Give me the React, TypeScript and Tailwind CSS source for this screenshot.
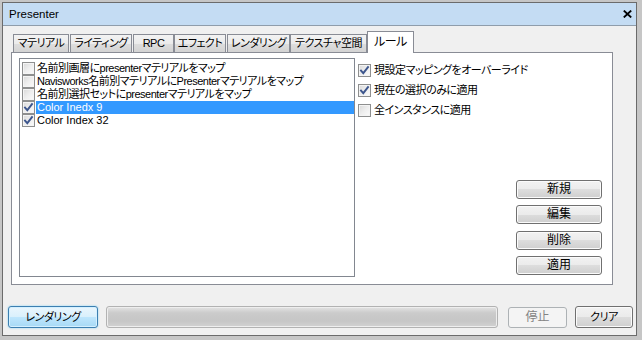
import React from 'react';

const Check: React.FC<{ checked?: boolean }> = ({ checked }) => (
  <span className="relative block w-[13px] h-[13px] shrink-0 border border-[#8e8f8f] bg-[linear-gradient(135deg,#d8d8d8_0%,#eeeeee_50%,#fbfbfb_100%)] shadow-[inset_0_0_0_1px_#f4f4f4]">
    {checked && (
      <svg viewBox="0 0 11 11" className="absolute left-0 top-0 w-[11px] h-[11px]">
        <path d="M2 5.6 L4.3 8.2 L9 2.2" fill="none" stroke="#3d568d" strokeWidth="1.9" strokeLinecap="square" />
      </svg>
    )}
  </span>
);

const tabs = [
  { label: 'マテリアル', w: 'w-[56px]', ml: 'ml-0' },
  { label: 'ライティング', w: 'w-[62px]', ml: 'ml-[1px]' },
  { label: 'RPC', w: 'w-[41px]', ml: 'ml-[1px]' },
  { label: 'エフェクト', w: 'w-[52px]', ml: 'ml-0' },
  { label: 'レンダリング', w: 'w-[63px]', ml: 'ml-[1px]' },
  { label: 'テクスチャ空間', w: 'w-[77px]', ml: 'ml-0' },
];

const rules = [
  { text: '名前別画層にpresenterマテリアルをマップ', checked: false },
  { text: 'Navisworks名前別マテリアルにPresenterマテリアルをマップ', checked: false },
  { text: '名前別選択セットにpresenterマテリアルをマップ', checked: false },
  { text: 'Color Inedx 9', checked: true, selected: true, latin: true },
  { text: 'Color Index 32', checked: true, latin: true },
];

const options = [
  { text: '現設定マッピングをオーバーライド', checked: true },
  { text: '現在の選択のみに適用', checked: true },
  { text: '全インスタンスに適用', checked: false },
];

const btn =
  'h-[19px] w-[86px] flex items-center justify-center rounded-[3px] border border-[#707070] bg-[linear-gradient(to_bottom,#f2f2f2_0%,#ebebeb_50%,#dddddd_50%,#cfcfcf_100%)] shadow-[inset_0_0_0_1px_#fbfbfb] text-black text-[12px] tracking-normal';

export default function App() {
  return (
    <div className="w-[642px] h-[340px] bg-[#c6c6c6] pl-[2px] pt-[2px] pr-[5px] pb-[4px] text-[11px] leading-[13px] tracking-[-0.5px] text-black font-['Liberation_Sans','Noto_Sans_CJK_JP',sans-serif] [font-feature-settings:'palt']">
      <div className="w-full h-full border border-[#6b6b6b] flex flex-col bg-[#f0f0f0]">
        {/* title bar */}
        <div className="h-[23px] shrink-0 flex items-center justify-between bg-[#c4dcf3] border-b border-[#8f9dab] pl-[6px] pr-[4px]">
          <span className="text-[11.5px] tracking-normal">Presenter</span>
          <svg viewBox="0 0 9 8" className="w-[9px] h-[8px]">
            <path d="M0.8 0.6 L8.2 7.4 M8.2 0.6 L0.8 7.4" stroke="#000" strokeWidth="1.9" />
          </svg>
        </div>

        <div className="flex-1 flex flex-col pt-[5px]">
          {/* tabs */}
          <div className="flex items-end h-[21px] ml-[10px]">
            {tabs.map((t) => (
              <div
                key={t.label}
                className={`${t.w} ${t.ml} h-[18px] flex items-center justify-center whitespace-nowrap border border-b-0 border-[#898c95] bg-[linear-gradient(to_bottom,#f3f3f3_0%,#ebebeb_50%,#dedede_50%,#d3d3d3_100%)]`}
              >
                {t.label}
              </div>
            ))}
            <div className="w-[47px] h-[22px] -mb-[1px] relative z-10 flex items-center justify-center whitespace-nowrap border border-b-0 border-[#898c95] bg-white text-[12px]">
              ルール
            </div>
          </div>

          {/* tab panel */}
          <div className="ml-[8px] w-[602px] h-[233px] border border-[#898c95] bg-white flex pl-[7px] pt-[5px]">
            <div className="w-[336px] h-[219px] shrink-0 border border-[#828790] pt-[3px]">
              {rules.map((r) => (
                <div key={r.text} className="h-[13px] flex items-center pl-[2px]">
                  <Check checked={r.checked} />
                  <span
                    className={`ml-[1px] pl-[1px] h-[13px] flex items-center whitespace-nowrap ${r.latin ? 'tracking-normal' : ''} ${r.selected ? 'flex-1 bg-[#3399ff] text-white' : ''}`}
                  >
                    {r.text}
                  </span>
                </div>
              ))}
            </div>

            <div className="flex-1 flex flex-col ml-[3px] pt-[6px]">
              {options.map((o, i) => (
                <div key={o.text} className={`h-[13px] flex items-center gap-[3px] ${i > 0 ? 'mt-[7px]' : ''}`}>
                  <Check checked={o.checked} />
                  <span className="whitespace-nowrap">{o.text}</span>
                </div>
              ))}

              <div className="flex flex-col items-end pr-[10px] mt-[63px]">
                <button className={btn}>新規</button>
                <button className={`${btn} mt-[6px]`}>編集</button>
                <button className={`${btn} mt-[7px]`}>削除</button>
                <button className={`${btn} mt-[6px]`}>適用</button>
              </div>
            </div>
          </div>

          {/* bottom row */}
          <div className="flex items-center h-[22px] mt-[21px] ml-[5px]">
            <button className="w-[90px] h-[22px] flex items-center justify-center rounded-[3px] border border-[#3c7fb1] bg-[linear-gradient(to_bottom,#eaf6fd_0%,#d9f0fc_50%,#bee6fd_50%,#a7d9f5_100%)] shadow-[inset_0_0_0_1px_#d4f0ff,0_0_2px_#7fd0f5]">
              レンダリング
            </button>
            <div className="ml-[8px] w-[392px] h-[22px] rounded-[3px] border border-[#b2b2b2] bg-[linear-gradient(to_bottom,#e4e4e4_0%,#cbcbcb_30%,#c6c6c6_70%,#d2d2d2_100%)] shadow-[inset_0_0_0_1px_#eeeeee]" />
            <button className="ml-[10px] w-[59px] h-[21px] flex items-center justify-center rounded-[3px] border border-[#adb2b5] bg-[#f4f4f4] text-[#838383] text-[12px] tracking-normal">
              停止
            </button>
            <button className="ml-[8px] w-[58px] h-[22px] flex items-center justify-center rounded-[3px] border border-[#707070] bg-[linear-gradient(to_bottom,#f2f2f2_0%,#ebebeb_50%,#dddddd_50%,#cfcfcf_100%)] shadow-[inset_0_0_0_1px_#fbfbfb]">
              クリア
            </button>
          </div>
        </div>
      </div>
    </div>
  );
}
